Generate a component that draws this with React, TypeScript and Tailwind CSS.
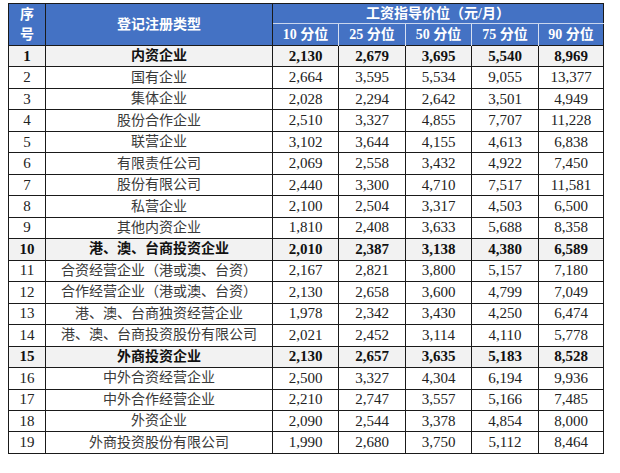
import React from 'react';

type Row = { no: number; name: string; vals: string[]; bold?: boolean };

const ROWS: Row[] = [
  { no: 1, name: '内资企业', vals: ['2,130', '2,679', '3,695', '5,540', '8,969'], bold: true },
  { no: 2, name: '国有企业', vals: ['2,664', '3,595', '5,534', '9,055', '13,377'] },
  { no: 3, name: '集体企业', vals: ['2,028', '2,294', '2,642', '3,501', '4,949'] },
  { no: 4, name: '股份合作企业', vals: ['2,510', '3,327', '4,855', '7,707', '11,228'] },
  { no: 5, name: '联营企业', vals: ['3,102', '3,644', '4,155', '4,613', '6,838'] },
  { no: 6, name: '有限责任公司', vals: ['2,069', '2,558', '3,432', '4,922', '7,450'] },
  { no: 7, name: '股份有限公司', vals: ['2,440', '3,300', '4,710', '7,517', '11,581'] },
  { no: 8, name: '私营企业', vals: ['2,100', '2,504', '3,317', '4,503', '6,500'] },
  { no: 9, name: '其他内资企业', vals: ['1,810', '2,408', '3,633', '5,688', '8,358'] },
  { no: 10, name: '港、澳、台商投资企业', vals: ['2,010', '2,387', '3,138', '4,380', '6,589'], bold: true },
  { no: 11, name: '合资经营企业（港或澳、台资）', vals: ['2,167', '2,821', '3,800', '5,157', '7,180'] },
  { no: 12, name: '合作经营企业（港或澳、台资）', vals: ['2,130', '2,658', '3,600', '4,799', '7,049'] },
  { no: 13, name: '港、澳、台商独资经营企业', vals: ['1,978', '2,342', '3,430', '4,250', '6,474'] },
  { no: 14, name: '港、澳、台商投资股份有限公司', vals: ['2,021', '2,452', '3,114', '4,110', '5,778'] },
  { no: 15, name: '外商投资企业', vals: ['2,130', '2,657', '3,635', '5,183', '8,528'], bold: true },
  { no: 16, name: '中外合资经营企业', vals: ['2,500', '3,327', '4,304', '6,194', '9,936'] },
  { no: 17, name: '中外合作经营企业', vals: ['2,210', '2,747', '3,557', '5,166', '7,485'] },
  { no: 18, name: '外资企业', vals: ['2,090', '2,544', '3,378', '4,854', '8,000'] },
  { no: 19, name: '外商投资股份有限公司', vals: ['1,990', '2,680', '3,750', '5,112', '8,464'] },
];

const PCTS = ['10', '25', '50', '75', '90'];
const serif = "font-['Liberation_Serif','Noto_Sans_CJK_SC',serif]";

export default function App() {
  return (
    <div className="w-[620px] h-[473px] bg-white pt-[3px] pl-[8px]">
      <table className={`border-collapse table-fixed w-[595px] border border-[#1a1a1a] ${serif}`}>
        <colgroup>
          <col className="w-[37px]" />
          <col className="w-[227px]" />
          <col className="w-[66px]" />
          <col className="w-[67px]" />
          <col className="w-[66px]" />
          <col className="w-[67px]" />
          <col className="w-[65px]" />
        </colgroup>
        <thead>
          <tr className="h-[20px] bg-[#4472c4] text-white font-bold text-[14px] leading-none">
            <th rowSpan={2} className="border border-[#1a1a1a] p-0 leading-[20px]">
              序<br />号
            </th>
            <th rowSpan={2} className="border border-[#1a1a1a] p-0">
              登记注册类型
            </th>
            <th colSpan={5} className="border-b border-[#c9d6ee] p-0">
              工资指导价位（元/月）
            </th>
          </tr>
          <tr className="h-[22px] bg-[#4472c4] text-white font-bold text-[14px] leading-none">
            {PCTS.map((p, i) => (
              <th
                key={p}
                className={`p-0 border-t border-[#c9d6ee] ${i > 0 ? 'border-l border-l-[#d6e0f2]' : ''}`}
              >
                {p} 分位
              </th>
            ))}
          </tr>
        </thead>
        <tbody>
          {ROWS.map((r) => (
            <tr
              key={r.no}
              className={`h-[21.47px] text-[14px] leading-none ${r.bold ? 'bg-[#f2f2f2] font-bold text-[#111]' : 'text-[#222]'}`}
            >
              <td className="border border-[#1a1a1a] p-0 text-center text-[15px]">{r.no}</td>
              <td className={`border border-[#1a1a1a] p-0 text-center whitespace-nowrap ${r.bold ? '' : 'text-[#3a3a3a]'}`}>
                {r.name}
              </td>
              {r.vals.map((v, i) => (
                <td key={i} className="border border-[#1a1a1a] p-0 text-center text-[15px]">
                  {v}
                </td>
              ))}
            </tr>
          ))}
        </tbody>
      </table>
    </div>
  );
}
